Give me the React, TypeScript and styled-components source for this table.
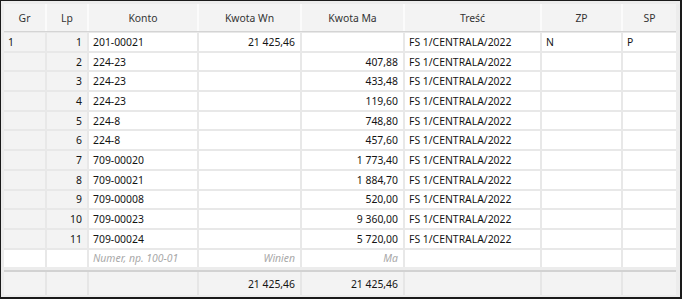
import React from 'react'
import styled, { createGlobalStyle } from 'styled-components'

const GlobalStyle = createGlobalStyle`
    html, body {
        margin: 0;
        padding: 0;
        background: #ffffff;
    }

    body {
        font-family: "Noto Sans", "Open Sans", Arial, sans-serif;
        font-size: 10.4px;
        color: #141414;
    }
`

type Entry = {
    gr?: string
    lp: number
    konto: string
    wn?: string
    ma?: string
    tresc: string
    zp?: string
    sp?: string
}

const entries: Entry[] = [
    { gr: '1', lp: 1, konto: '201-00021', wn: '21 425,46', tresc: 'FS 1/CENTRALA/2022', zp: 'N', sp: 'P' },
    { lp: 2, konto: '224-23', ma: '407,88', tresc: 'FS 1/CENTRALA/2022' },
    { lp: 3, konto: '224-23', ma: '433,48', tresc: 'FS 1/CENTRALA/2022' },
    { lp: 4, konto: '224-23', ma: '119,60', tresc: 'FS 1/CENTRALA/2022' },
    { lp: 5, konto: '224-8', ma: '748,80', tresc: 'FS 1/CENTRALA/2022' },
    { lp: 6, konto: '224-8', ma: '457,60', tresc: 'FS 1/CENTRALA/2022' },
    { lp: 7, konto: '709-00020', ma: '1 773,40', tresc: 'FS 1/CENTRALA/2022' },
    { lp: 8, konto: '709-00021', ma: '1 884,70', tresc: 'FS 1/CENTRALA/2022' },
    { lp: 9, konto: '709-00008', ma: '520,00', tresc: 'FS 1/CENTRALA/2022' },
    { lp: 10, konto: '709-00023', ma: '9 360,00', tresc: 'FS 1/CENTRALA/2022' },
    { lp: 11, konto: '709-00024', ma: '5 720,00', tresc: 'FS 1/CENTRALA/2022' },
]

const COLUMNS = '41px 40px 108px 101px 101px 135px 79px 53px'

/**
 * App
 *
 */
const App = () => {
    return (
        <>
            <GlobalStyle />
            <Frame>
                <HeaderRow>
                    <HeadCell>Gr</HeadCell>
                    <HeadCell>Lp</HeadCell>
                    <HeadCell>Konto</HeadCell>
                    <HeadCell>Kwota Wn</HeadCell>
                    <HeadCell>Kwota Ma</HeadCell>
                    <HeadCell>Treść</HeadCell>
                    <HeadCell>ZP</HeadCell>
                    <HeadCell>SP</HeadCell>
                </HeaderRow>
                <Body>
                    {entries.map((e) => (
                        <Row key={e.lp}>
                            <Cell $muted>{e.gr}</Cell>
                            <Cell $muted $right>{e.lp}</Cell>
                            <Cell>{e.konto}</Cell>
                            <Cell $right>{e.wn}</Cell>
                            <Cell $right>{e.ma}</Cell>
                            <Cell>{e.tresc}</Cell>
                            <Cell>{e.zp}</Cell>
                            <Cell>{e.sp}</Cell>
                        </Row>
                    ))}
                    <Row>
                        <Cell />
                        <Cell />
                        <Cell $hint>Numer, np. 100-01</Cell>
                        <Cell $hint $right>Winien</Cell>
                        <Cell $hint $right>Ma</Cell>
                        <Cell />
                        <Cell />
                        <Cell />
                    </Row>
                </Body>
                <FooterRow>
                    <FootCell />
                    <FootCell />
                    <FootCell />
                    <FootCell $right>21 425,46</FootCell>
                    <FootCell $right>21 425,46</FootCell>
                    <FootCell />
                    <FootCell />
                    <FootCell />
                </FooterRow>
            </Frame>
        </>
    )
}

export default App

/**
 * Frame
 *
 */
const Frame = styled.div`
    box-sizing: border-box;
    width: 682px;
    height: 299px;
    border: 1px solid #1a1a1a;
    border-right-width: 2px;
    border-bottom-width: 2px;
    background: #ececec;
    padding: 3px 4px 2px 3px;
    display: flex;
    flex-direction: column;
`

const HeaderRow = styled.div`
    display: grid;
    grid-template-columns: ${COLUMNS};
    column-gap: 2px;
    height: 27px;
    background: #fbfbfb;
    border-bottom: 1px solid #d4d4d4;
`

const HeadCell = styled.div`
    display: flex;
    align-items: center;
    justify-content: center;
    background: #f3f3f3;
    color: #333333;
`

const Body = styled.div`
    display: flex;
    flex-direction: column;
    gap: 2px;
    padding-top: 1px;
    background: #e8e8e8;
`

const Row = styled.div`
    display: grid;
    grid-template-columns: ${COLUMNS};
    column-gap: 2px;
    height: 17.7px;
`

const Cell = styled.div<{ $right?: boolean; $muted?: boolean; $hint?: boolean }>`
    display: flex;
    align-items: center;
    justify-content: ${(p) => (p.$right ? 'flex-end' : 'flex-start')};
    padding: ${(p) => (p.$right ? '0 5px 0 0' : '0 0 0 4px')};
    background: ${(p) => (p.$muted ? '#f3f3f3' : '#ffffff')};
    color: ${(p) => (p.$hint ? '#a8a8a8' : '#141414')};
    font-style: ${(p) => (p.$hint ? 'italic' : 'normal')};
    white-space: nowrap;
    overflow: hidden;
`

const FooterRow = styled.div`
    display: grid;
    grid-template-columns: ${COLUMNS};
    column-gap: 2px;
    margin-top: 3px;
    border-top: 2px solid #d2d2d2;
    flex: 1;
    background: #e6e6e6;
`

const FootCell = styled.div<{ $right?: boolean }>`
    display: flex;
    align-items: center;
    justify-content: ${(p) => (p.$right ? 'flex-end' : 'flex-start')};
    padding: ${(p) => (p.$right ? '0 5px 0 0' : '0 0 0 4px')};
    background: #f3f3f3;
    color: #141414;
`
